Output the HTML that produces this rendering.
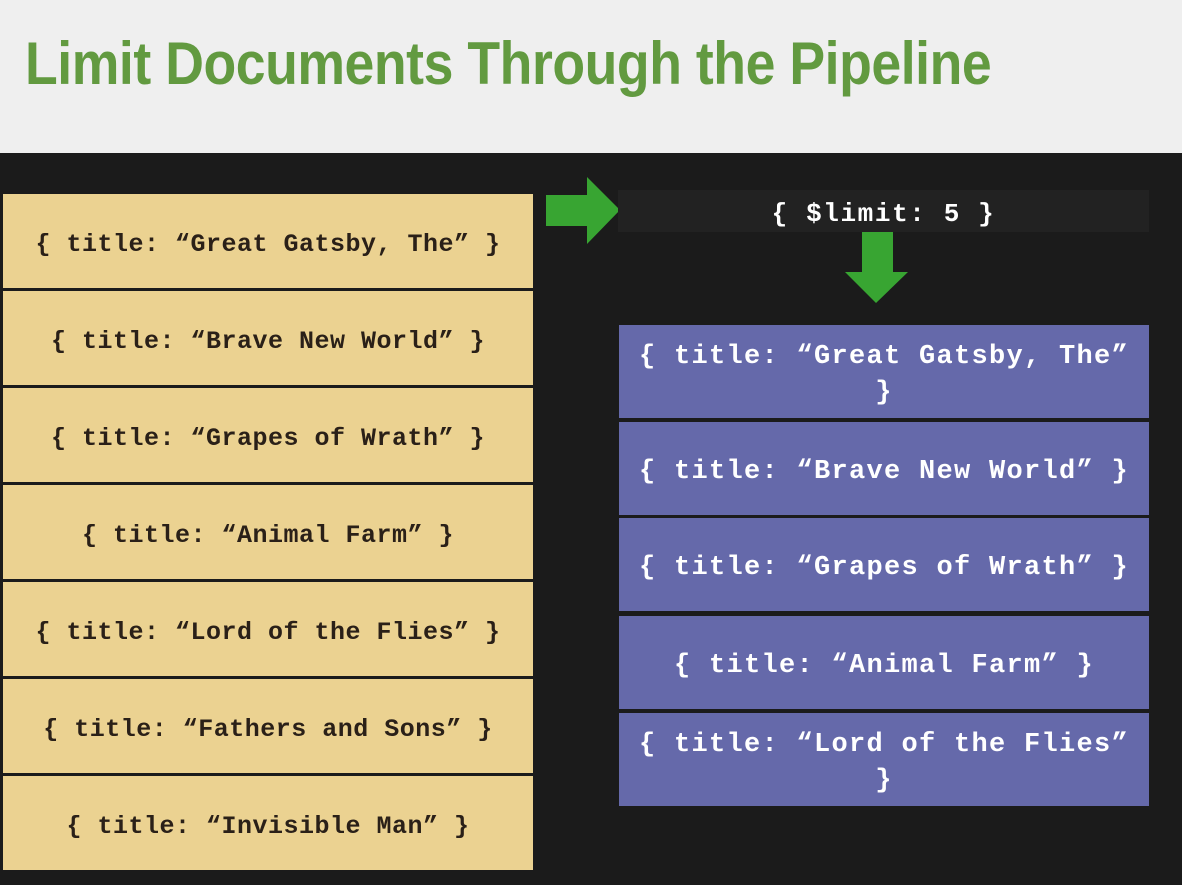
<!DOCTYPE html>
<html><head><meta charset="utf-8"><style>
body{margin:0;width:1182px;height:885px;overflow:hidden;background:#1b1b1b;position:relative;font-family:"Liberation Mono",monospace}
.hdr{position:absolute;left:0;top:0;width:1182px;height:153px;background:#efefef}
.hdr h1{position:absolute;left:25px;top:29px;margin:0;font:bold 60px/70px "Liberation Sans",sans-serif;color:#629a40;white-space:nowrap;transform:scaleX(0.893);transform-origin:left top;letter-spacing:-0.5px}
.l{position:absolute;left:3px;width:530px;height:94px;background:#ebd291;color:#2a2018;font-weight:bold;font-size:25px;letter-spacing:0.5px;display:flex;align-items:center;justify-content:center;white-space:nowrap;padding-top:6px;box-sizing:border-box}
.r{position:absolute;left:619px;width:530px;height:93px;background:#6569aa;color:#fff;font-weight:bold;font-size:27px;letter-spacing:1.3px;line-height:36px;display:flex;align-items:center;justify-content:center;text-align:center;padding:6px 14px 0;box-sizing:border-box}
.cmd{position:absolute;left:618px;top:190px;width:531px;height:42px;background:#222;color:#fff;font-weight:bold;font-size:26px;letter-spacing:1.6px;display:flex;align-items:center;justify-content:center;padding-top:5px;box-sizing:border-box}
</style></head><body>
<div class="hdr"><h1>Limit Documents Through the Pipeline</h1></div>
<div class="l" style="top:194px">{ title: “Great Gatsby, The” }</div>
<div class="l" style="top:291px">{ title: “Brave New World” }</div>
<div class="l" style="top:388px">{ title: “Grapes of Wrath” }</div>
<div class="l" style="top:485px">{ title: “Animal Farm” }</div>
<div class="l" style="top:582px">{ title: “Lord of the Flies” }</div>
<div class="l" style="top:679px">{ title: “Fathers and Sons” }</div>
<div class="l" style="top:776px">{ title: “Invisible Man” }</div>
<svg style="position:absolute;left:0;top:0" width="1182" height="885"><polygon points="546,195 587,195 587,177 620,210 587,244 587,226 546,226" fill="#38a532"/><polygon points="862,232 893,232 893,272 908,272 876,303 845,272 862,272" fill="#38a532"/></svg>
<div class="cmd">{ $limit: 5 }</div>
<div class="r" style="top:325px">{ title: “Great Gatsby, The” }</div>
<div class="r" style="top:422px">{ title: “Brave New World” }</div>
<div class="r" style="top:518px">{ title: “Grapes of Wrath” }</div>
<div class="r" style="top:616px">{ title: “Animal Farm” }</div>
<div class="r" style="top:713px">{ title: “Lord of the Flies” }</div>
</body></html>
